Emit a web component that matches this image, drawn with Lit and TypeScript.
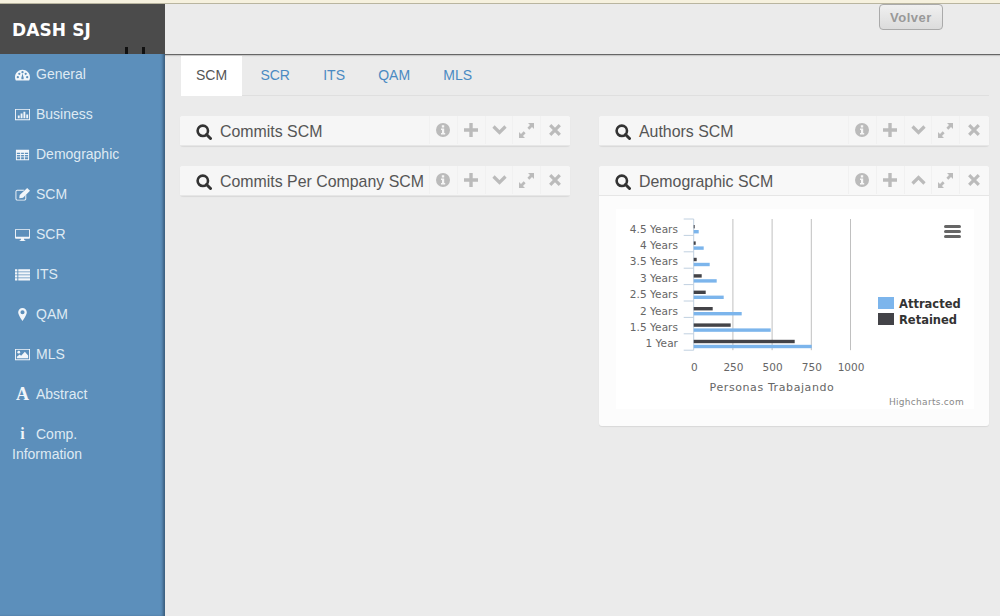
import { LitElement, html, css, svg } from "lit";
import { customElement } from "lit/decorators.js";

const navIcons: Record<string, unknown> = {
  gauge: svg`<path fill-rule="evenodd" d="M8 3C3.6 3 0 6.6 0 11c0 1.3.3 2.500.9 3.500h14.200c.6-1 .9-2.200.9-3.500 0-4.400-3.600-8-8-8zM3 12a1.200 1.200 0 1 1 0-2.400A1.200 1.200 0 0 1 3 12zm1.600-3.500a1.200 1.200 0 1 1 0-2.400 1.200 1.200 0 0 1 0 2.400zM8 6.700a1.200 1.200 0 1 1 0-2.400 1.200 1.200 0 0 1 0 2.400zm1 6.300H7l-.3-1.200L8 7l1.300 4.800zM13 12a1.200 1.200 0 1 1 0-2.400 1.200 1.200 0 0 1 0 2.400zm-1.600-3.500a1.200 1.200 0 1 1 0-2.400 1.200 1.200 0 0 1 0 2.400z"/>`,
  bars: svg`<path fill-rule="evenodd" d="M0 2h16v12H0zM1 3v10h14V3z"/><path d="M3 9h2v3H3zM6 7h2v5H6zM9 5h2v7H9zM12 8h2v4h-2z"/>`,
  table: svg`<path fill-rule="evenodd" d="M1 3h14v11H1zM2 6v1.500h3.500V6zm4.500 0v1.500h3V6zm4 0v1.500H14V6zM2 8.500V10h3.500V8.500zm4.500 0V10h3V8.500zm4 0V10H14V8.500zM2 11v2h3.500v-2zm4.500 0v2h3v-2zm4 0v2H14v-2z"/>`,
  edit: svg`<path d="M2.500 3H10L9 4H2.500C2 4 1.500 4.500 1.500 5v7.500c0 .5.5 1 1 1H10c.5 0 1-.5 1-1V9l1-1v4.500c0 1.100-.9 2-2 2H2.500c-1.100 0-2-.9-2-2V5c0-1.100.9-2 2-2z"/><path d="M13 1l3 3-7.500 7.500L4.500 12l.5-3.500z"/>`,
  desktop: svg`<path fill-rule="evenodd" d="M1 2h14c.6 0 1 .4 1 1v8.500c0 .6-.4 1-1 1H9.500l.5 1.500h1v1H5v-1h1l.5-1.500H1c-.6 0-1-.4-1-1V3c0-.6.4-1 1-1zm0 1v7.500h14V3z"/>`,
  list: svg`<path d="M0 2.500h2.500v2.200H0zM3.500 2.500H16v2.200H3.500zM0 5.700h2.500v2.200H0zM3.500 5.700H16v2.200H3.500zM0 8.900h2.500v2.200H0zM3.500 8.900H16v2.200H3.500zM0 12.100h2.500v2.200H0zM3.500 12.100H16v2.200H3.500z"/>`,
  marker: svg`<path fill-rule="evenodd" d="M8 1a4.600 4.600 0 0 0-4.600 4.600C3.400 8.500 8 15 8 15s4.600-6.500 4.600-9.400A4.600 4.600 0 0 0 8 1zm0 6.800a2.200 2.200 0 1 1 0-4.400 2.200 2.200 0 0 1 0 4.400z"/>`,
  picture: svg`<path fill-rule="evenodd" d="M0 2h16v12H0zM1 3v10h14V3z"/><circle cx="4" cy="5.500" r="1.500"/><path d="M2 12v-1.500L5 8l1.500 1.200L10.500 5 14 9v3z"/>`,
};

const NAV = [
  { t: "General", i: "gauge" },
  { t: "Business", i: "bars" },
  { t: "Demographic", i: "table" },
  { t: "SCM", i: "edit" },
  { t: "SCR", i: "desktop" },
  { t: "ITS", i: "list" },
  { t: "QAM", i: "marker" },
  { t: "MLS", i: "picture" },
];

const CATS = [
  { l: "4.5 Years", d: 1, b: 5 },
  { l: "4 Years", d: 2, b: 10 },
  { l: "3.5 Years", d: 3, b: 16 },
  { l: "3 Years", d: 8, b: 23 },
  { l: "2.5 Years", d: 12, b: 30 },
  { l: "2 Years", d: 19, b: 48 },
  { l: "1.5 Years", d: 37, b: 77 },
  { l: "1 Year", d: 101, b: 118 },
];

function chart() {
  // svg origin is at page (616,209)
  const ox = 77.7;
  const top = 10;
  const step = 16.4;
  const bottom = top + step * 8;
  const grid = [250, 500, 750, 1000].map((v, i) => ox + 39.2 * (i + 1));
  return html`<svg class="chart" width="358" height="200" viewBox="0 0 358 200">
    ${grid.map((x) => svg`<line x1=${x} x2=${x} y1=${top} y2=${bottom} stroke="#c0c0c0" stroke-width="1"></line>`)}
    <line x1=${ox} x2=${ox} y1=${top} y2=${bottom} stroke="#c0d0e0"></line>
    ${CATS.map((_, i) => svg`<line x1=${ox - 10} x2=${ox} y1=${top + step * i} y2=${top + step * i} stroke="#c0d0e0"></line>`)}
    <line x1=${ox - 10} x2=${ox} y1=${bottom} y2=${bottom} stroke="#c0d0e0"></line>
    ${CATS.map((c, i) => {
      const y = top + step * i;
      return svg`
        <rect x=${ox} y=${y + 6} width=${c.d} height="3.400" fill="#434348"></rect>
        <rect x=${ox} y=${y + 11} width=${c.b} height="3.400" fill="#7cb5ec"></rect>
        <text class="lbl cat" x=${62} y=${y + 13.6} text-anchor="end">${c.l}</text>`;
    })}
    ${[0, ...grid.map((_, i) => (i + 1) * 250)].map((v, i) => svg`<text class="lbl cat" x=${ox + 0.6 + 39.2 * i} y="162" text-anchor="middle">${v}</text>`)}
    <text class="lbl" x="156" y="182" text-anchor="middle">Personas Trabajando</text>
    <text class="credit" x="348" y="196" text-anchor="end">Highcharts.com</text>
    <g fill="#666">
      <rect x="328" y="16" width="17" height="3" rx="1.500"></rect>
      <rect x="328" y="21" width="17" height="3" rx="1.500"></rect>
      <rect x="328" y="26" width="17" height="3" rx="1.500"></rect>
    </g>
    <rect x="262" y="88" width="16" height="12" fill="#7cb5ec"></rect>
    <rect x="262" y="104" width="16" height="12" fill="#434348"></rect>
    <text class="leg" x="283" y="99">Attracted</text>
    <text class="leg" x="283" y="115">Retained</text>
  </svg>`;
}

const tools = (open: boolean) => html`
  <div class="tool">
    <svg width="14" height="14" viewBox="0 0 14 14"><path fill="#bbb" fill-rule="evenodd" d="M7 0a7 7 0 1 0 0 14A7 7 0 0 0 7 0zM5.800 2.300h2.400v2.100H5.800zM5 5.500h3.200V10h1v1.400H5V10h1V6.900H5z"/></svg>
  </div>
  <div class="tool">
    <svg width="14" height="14" viewBox="0 0 14 14"><path fill="#bbb" d="M5.300 0h3.400v5.300H14v3.400H8.700V14H5.300V8.700H0V5.300h5.300z"/></svg>
  </div>
  <div class="tool">
    <svg width="15" height="12" viewBox="0 0 15 12"><path fill="none" stroke="#bbb" stroke-width="3.200" d=${open ? "M1.500 9.500 7.500 3.500 13.500 9.500" : "M1.500 2.500 7.500 8.500 13.500 2.500"}/></svg>
  </div>
  <div class="tool">
    <svg width="15" height="15" viewBox="0 0 15 15"><path fill="#bbb" d="M9 0h6v6l-2-2-2.700 2.700-1.900-1.900L11 2zM0 15V9l2 2 2.700-2.700 1.900 1.900L4 13l2 2z"/></svg>
  </div>
  <div class="tool">
    <svg width="12" height="12" viewBox="0 0 12 12"><path stroke="#bbb" stroke-width="3.200" d="M1.200 1.200 10.800 10.800M10.800 1.200 1.200 10.800"/></svg>
  </div>`;

const panel = (title: string, open = false, body: unknown = null) => html`
  <section class="panel ${open ? "open" : ""}">
    <header class="phead">
      <svg class="search" width="16" height="16" viewBox="0 0 16 16">
        <circle cx="6.800" cy="6.800" r="5.200" fill="none" stroke="#333" stroke-width="2.600"></circle>
        <path d="M10.500 10.500 14.500 14.500" stroke="#333" stroke-width="3" stroke-linecap="round"></path>
      </svg>
      <h3 class="ptitle">${title}</h3>
      <div class="tools">${tools(open)}</div>
    </header>
    ${body ? html`<div class="pbody">${body}</div>` : null}
  </section>`;

@customElement("app-root")
export class AppRoot extends LitElement {
  static styles = css`
    :host {
      display: block;
      width: 1000px;
      height: 616px;
      overflow: hidden;
      background: #ebebeb;
      font-family: "Liberation Sans", Arial, sans-serif;
    }
    .strip {
      height: 3px;
      background: #f6f1de;
      border-bottom: 1px solid #b9b59f;
    }
    .shell {
      display: grid;
      grid-template-columns: 165px 1fr;
      height: 612px;
    }
    .side {
      background: #5c8fbb;
      box-shadow: inset -3px 0 3px -1px rgba(30, 50, 70, 0.55);
    }
    .brand {
      position: relative;
      height: 50px;
      box-sizing: border-box;
      padding: 15px 12px 0;
      background: #4b4b4b;
      color: #fff;
      font: bold 17px/22px "DejaVu Sans", sans-serif;
      letter-spacing: 0.1px;
    }
    .mark {
      position: absolute;
      bottom: 0;
      width: 3px;
      height: 7px;
      background: #111;
    }
    .m1 { left: 125px; }
    .m2 { left: 142px; }
    .nav {
      margin: 0;
      padding: 0;
      list-style: none;
    }
    .nav li {
      display: flex;
      align-items: center;
      padding: 10px 0 10px 15px;
      height: 20px;
      color: #dfeaf3;
      font-size: 14px;
      line-height: 20px;
    }
    .nav svg {
      width: 15px;
      height: 15px;
      fill: #f2f6fa;
      margin-right: 6px;
      flex: none;
    }
    .glyph {
      width: 15px;
      margin-right: 6px;
      text-align: center;
      color: #f2f6fa;
      font: bold 18px/20px "Liberation Serif", serif;
      flex: none;
    }
    .nav li.multi {
      display: block;
      height: auto;
      padding-left: 12px;
    }
    .multi .glyph {
      display: inline-block;
      margin-left: 3px;
      font-size: 16px;
    }
    .main {
      min-width: 0;
    }
    .top {
      height: 51px;
      box-sizing: border-box;
      border-bottom: 1px solid #666;
      box-shadow: 0 1px 1px rgba(0, 0, 0, 0.15);
      display: flex;
      justify-content: flex-end;
      align-items: flex-start;
      padding-right: 57px;
    }
    .btn {
      width: 64px;
      height: 26px;
      box-sizing: border-box;
      border: 1px solid #aaa;
      border-radius: 4px;
      background: linear-gradient(#f0f0f0, #dcdcdc);
      color: #999;
      font: bold 13px "Liberation Sans", sans-serif;
      letter-spacing: 0.5px;
      padding: 0;
    }
    .tabs {
      display: flex;
      gap: 3.250px;
      margin: 1px 11px 0 16px;
      height: 40px;
      box-sizing: border-box;
      border-bottom: 1px solid #dfdfdf;
      list-style: none;
      padding: 0;
    }
    .tabs li {
      height: 40px;
      box-sizing: border-box;
      padding: 0 15px;
      font-size: 14px;
      line-height: 38px;
      color: #4a8ac2;
    }
    .tabs li.on {
      background: #fff;
      color: #555;
    }
    .cols {
      display: grid;
      grid-template-columns: 390px 390px;
      column-gap: 29px;
      padding: 20px 0 0 15px;
    }
    .col {
      display: flex;
      flex-direction: column;
      gap: 20px;
      align-items: stretch;
    }
    .panel {
      background: #fcfcfc;
      border-radius: 3px;
      box-shadow: 0 1px 1px rgba(0, 0, 0, 0.08);
    }
    .phead {
      display: flex;
      align-items: center;
      height: 30px;
      padding-left: 16px;
      background: #f6f6f6;
      border-radius: 3px 3px 0 0;
      border-bottom: 1px solid #e6e6e6;
      box-sizing: border-box;
    }
    .open .phead {
      background: #f8f8f8;
    }
    .search {
      flex: none;
      margin-right: 8px;
      margin-top: 2px;
    }
    .ptitle {
      margin: 2px 0 0;
      flex: 1;
      font-size: 15.900px;
      font-weight: normal;
      color: #555;
      white-space: nowrap;
    }
    .tools {
      display: flex;
      height: 100%;
      flex: none;
      padding-right: 2px;
      padding-bottom: 1px;
      box-sizing: border-box;
    }
    .tool {
      width: 27.800px;
      height: 100%;
      display: flex;
      align-items: center;
      justify-content: center;
      border-left: 1px solid #f1f1f1;
      box-sizing: border-box;
    }
    .pbody {
      padding: 13px 15px 17px 17px;
    }
    .chart {
      display: block;
      background: #fff;
    }
    .lbl {
      font: 11px "DejaVu Sans", sans-serif;
      letter-spacing: 0.6px;
      fill: #666;
    }
    .cat {
      font-size: 10.500px;
      letter-spacing: 0.05px;
    }
    .credit {
      font: 9px "DejaVu Sans", sans-serif;
      letter-spacing: 0.3px;
      fill: #888;
    }
    .leg {
      font: bold 11.500px "DejaVu Sans", sans-serif;
      fill: #333;
    }
  `;

  render() {
    return html`
      <div class="strip"></div>
      <div class="shell">
        <aside class="side">
          <div class="brand">DASH SJ<span class="mark m1"></span><span class="mark m2"></span></div>
          <ul class="nav">
            ${NAV.map((n) => html`<li><svg viewBox="0 0 16 16">${navIcons[n.i]}</svg>${n.t}</li>`)}
            <li><span class="glyph">A</span>Abstract</li>
            <li class="multi"><span class="glyph">i</span>Comp.<br />Information</li>
          </ul>
        </aside>
        <div class="main">
          <div class="top"><button class="btn">Volver</button></div>
          <ul class="tabs">
            <li class="on">SCM</li>
            <li>SCR</li>
            <li>ITS</li>
            <li>QAM</li>
            <li>MLS</li>
          </ul>
          <div class="cols">
            <div class="col">${panel("Commits SCM")}${panel("Commits Per Company SCM")}</div>
            <div class="col">${panel("Authors SCM")}${panel("Demographic SCM", true, chart())}</div>
          </div>
        </div>
      </div>
    `;
  }
}
